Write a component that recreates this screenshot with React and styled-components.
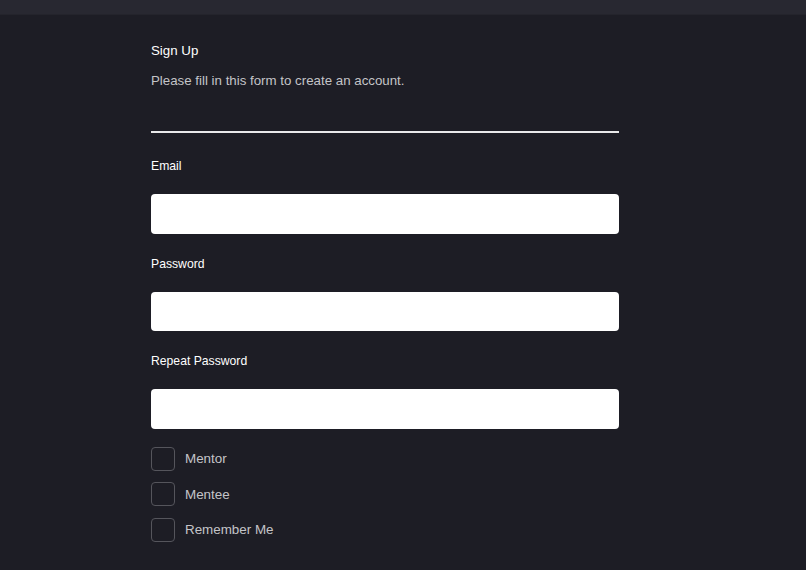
import React from "react";
import styled, { createGlobalStyle } from "styled-components";

const Global = createGlobalStyle`
  html, body { margin: 0; padding: 0; background: #1d1d25; }
  body { font-family: "Liberation Sans", Arial, sans-serif; }
  * { box-sizing: border-box; }
`;

const TopBar = styled.div`
  height: 15px;
  background: #282831;
  border-bottom: 1px solid #24242c;
`;

const Page = styled.div`
  min-height: 570px;
  background: #1d1d25;
`;

const Form = styled.form`
  width: 468px;
  margin-left: 151px;
  padding-top: 27px;
  display: flex;
  flex-direction: column;
`;

const Title = styled.h1`
  margin: 0;
  font-size: 13.3px;
  font-weight: 400;
  color: #ffffff;
  line-height: 18px;
`;

const Subtitle = styled.p`
  margin: 12px 0 0;
  font-size: 13.3px;
  color: #c4c4c8;
  line-height: 18px;
`;

const Rule = styled.hr`
  margin: 41px 0 0;
  border: none;
  height: 2px;
  background: #e8e8ea;
`;

const Label = styled.label`
  margin-top: ${(p) => p.$top}px;
  font-size: 12.2px;
  color: #ffffff;
  line-height: 16px;
`;

const Input = styled.input`
  margin-top: 20px;
  height: 39.5px;
  width: 100%;
  border: none;
  border-radius: 4px;
  background: #ffffff;
  outline: none;
`;

const Checks = styled.div`
  margin-top: 18px;
  display: flex;
  flex-direction: column;
  gap: 11.5px;
`;

const CheckRow = styled.label`
  display: flex;
  align-items: center;
  gap: 10px;
  font-size: 13.4px;
  color: #c4c4c8;
  cursor: pointer;
`;

const Box = styled.span`
  width: 24px;
  height: 24px;
  border: 1px solid #55555c;
  border-radius: 4px;
  flex-shrink: 0;
`;

export default function App() {
  return (
    <Page>
      <Global />
      <TopBar />
      <Form>
        <Title>Sign Up</Title>
        <Subtitle>Please fill in this form to create an account.</Subtitle>
        <Rule />
        <Label $top={25}>Email</Label>
        <Input type="email" />
        <Label $top={22}>Password</Label>
        <Input type="password" />
        <Label $top={22}>Repeat Password</Label>
        <Input type="password" />
        <Checks>
          {["Mentor", "Mentee", "Remember Me"].map((t) => (
            <CheckRow key={t}>
              <Box />
              {t}
            </CheckRow>
          ))}
        </Checks>
      </Form>
    </Page>
  );
}
